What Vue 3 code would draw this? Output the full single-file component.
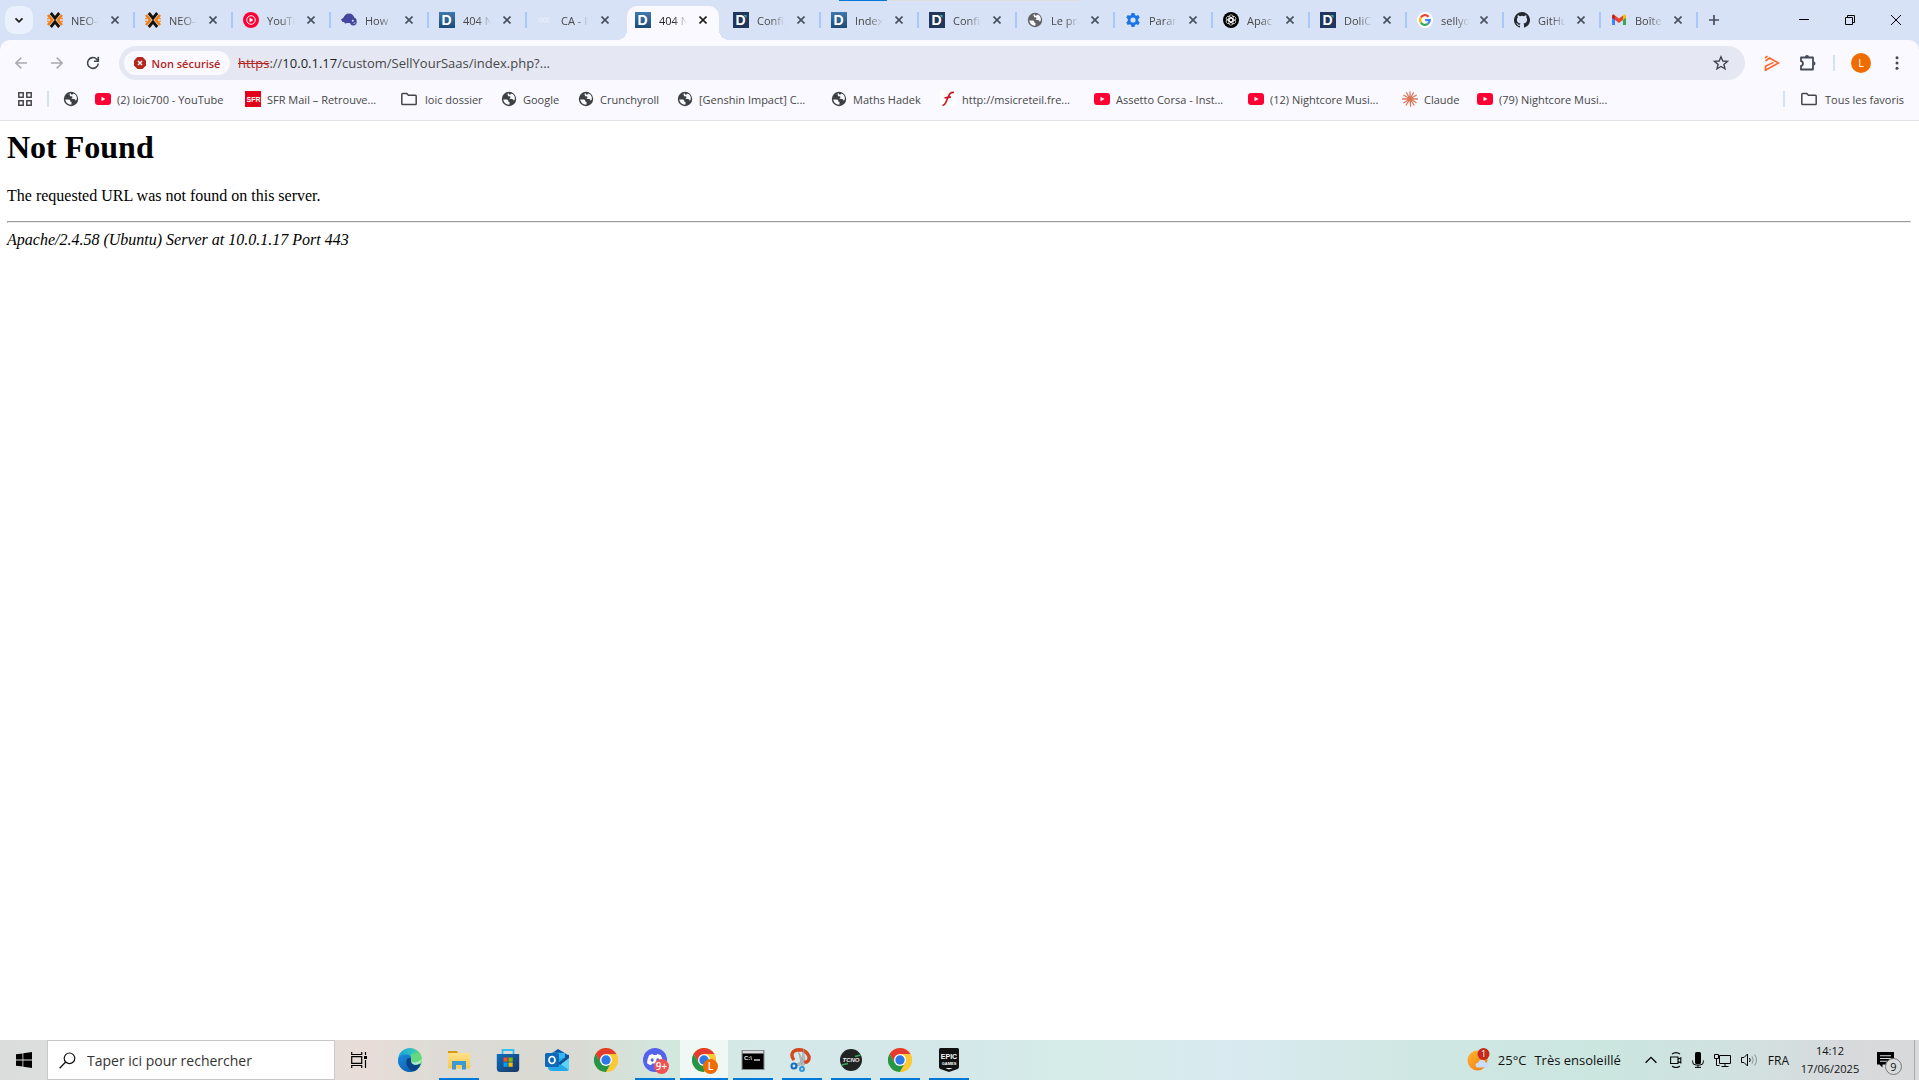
<script setup>
import { ref } from 'vue'

const tabs = [
  { title: 'NEO-N', icon: 'neo' },
  { title: 'NEO-N', icon: 'neo' },
  { title: 'YouTube', icon: 'ytmusic' },
  { title: 'How', icon: 'elephant' },
  { title: '404 Not', icon: 'doli' },
  { title: 'CA - I', icon: 'faint' },
  { title: '404 Not', icon: 'doli', active: true },
  { title: 'Config', icon: 'dolidark' },
  { title: 'Index', icon: 'doli' },
  { title: 'Config', icon: 'dolidark' },
  { title: 'Le pro', icon: 'globegrey' },
  { title: 'Param', icon: 'gear' },
  { title: 'Apac', icon: 'gpt', narrow: true },
  { title: 'DoliCl', icon: 'dolidark', narrow: true },
  { title: 'sellyo', icon: 'google', narrow: true },
  { title: 'GitHub', icon: 'github', narrow: true },
  { title: 'Boîte', icon: 'gmail', narrow: true },
]

const bookmarks = [
  { title: '', icon: 'globe', width: 32 },
  { title: '(2) loic700 - YouTube', icon: 'youtube', width: 150 },
  { title: 'SFR Mail – Retrouve...', icon: 'sfr', width: 156 },
  { title: 'loic dossier', icon: 'folder', width: 100, folder: true },
  { title: 'Google', icon: 'globe', width: 77 },
  { title: 'Crunchyroll', icon: 'globe', width: 99 },
  { title: '[Genshin Impact] C...', icon: 'globe', width: 154 },
  { title: 'Maths Hadek', icon: 'globe', width: 109 },
  { title: 'http://msicreteil.fre...', icon: 'free', width: 154 },
  { title: 'Assetto Corsa - Inst...', icon: 'youtube', width: 154 },
  { title: '(12) Nightcore Musi...', icon: 'youtube', width: 154 },
  { title: 'Claude', icon: 'claude', width: 75 },
  { title: '(79) Nightcore Musi...', icon: 'youtube', width: 150 },
]

const apps = [
  { name: 'Microsoft Edge', icon: 'edge' },
  { name: 'Explorateur de fichiers', icon: 'explorer', open: true },
  { name: 'Microsoft Store', icon: 'store' },
  { name: 'Outlook', icon: 'outlook' },
  { name: 'Google Chrome', icon: 'chrome' },
  { name: 'Discord', icon: 'discord', open: true, badge: '9+' },
  { name: 'Google Chrome', icon: 'chrome', open: true, current: true, badge: 'L' },
  { name: 'Invite de commandes', icon: 'cmd', open: true },
  { name: 'Outil Capture', icon: 'snip', open: true },
  { name: 'TCNO', icon: 'tcno', open: true },
  { name: 'Google Chrome', icon: 'chrome', open: true },
  { name: 'Epic Games', icon: 'epic', open: true },
]

const path = ref('/custom/SellYourSaas/index.php?...')
const query = ref('')
</script>

<template>
  <svg class="gradients" aria-hidden="true">
    <defs>
      <linearGradient id="g-doli" x1="0" y1="0" x2="0" y2="1"><stop offset="0" stop-color="#3f79b0" /><stop offset="1" stop-color="#1c4a78" /></linearGradient>
      <linearGradient id="g-edge" x1="0" y1="0" x2="1" y2="0"><stop offset="0" stop-color="#1e9fdc" /><stop offset=".55" stop-color="#2cc0c8" /><stop offset="1" stop-color="#6fdd5c" /></linearGradient>
      <linearGradient id="g-edge2" x1="0" y1="0" x2="1" y2="1"><stop offset="0" stop-color="#1a8de0" /><stop offset="1" stop-color="#0c4f9c" /></linearGradient>
      <linearGradient id="g-store" x1="0" y1="0" x2="1" y2="1"><stop offset="0" stop-color="#0d6fc0" /><stop offset="1" stop-color="#1c3560" /></linearGradient>
      <linearGradient id="g-folder" x1="0" y1="0" x2="0" y2="1"><stop offset="0" stop-color="#ffe08a" /><stop offset="1" stop-color="#fbc84a" /></linearGradient>
      <linearGradient id="g-sun" x1="0" y1="0" x2="1" y2="1"><stop offset="0" stop-color="#ffb52e" /><stop offset="1" stop-color="#f07a13" /></linearGradient>
    </defs>
  </svg>
  <svg class="sprite" aria-hidden="true">
    <symbol id="i-neo" viewBox="0 0 16 16"><path d="M1 3l4 5-4 5M15 3l-4 5 4 5" fill="none" stroke="#f57c0a" stroke-width="2.600" /><path d="M0 7l2-.5M0 9.500l2-.5M16 7l-2-.5M16 9.500l-2-.5" fill="none" stroke="#f57c0a" stroke-width="1" /><path d="M3.800 1L8 6.200 12.200 1M3.800 15L8 9.800l4.200 5.200" fill="none" stroke="#17120c" stroke-width="2.800" /></symbol>
    <symbol id="i-ytmusic" viewBox="0 0 16 16"><circle cx="8" cy="8" r="8" fill="#ff0033" /><circle cx="8" cy="8" r="4.300" fill="none" stroke="#fff" stroke-width="1" /><path d="M6.500 5.600v4.800L10.400 8z" fill="#fff" /></symbol>
    <symbol id="i-elephant" viewBox="0 0 16 16"><g fill="#4446a0"><ellipse cx="8" cy="6.300" rx="5.300" ry="4.800" /><ellipse cx="12.300" cy="9.500" rx="3.400" ry="4" /><path d="M0 7.500l4-3 5 6-5 1-1-1.500H1.500z" /></g><circle cx="11.800" cy="8.800" r="1" fill="#dde3f5" /><path d="M12.500 11.500l1.800-.6" stroke="#dde3f5" stroke-width=".8" /></symbol>
    <symbol id="i-doli" viewBox="0 0 16 16"><rect width="16" height="16" fill="url(#g-doli)" /><text x="2.500" y="12.800" class="d-mark">D</text></symbol>
    <symbol id="i-dolidark" viewBox="0 0 16 16"><rect width="16" height="16" fill="#20365c" /><text x="2.500" y="12.800" class="d-mark">D</text><path d="M10.500 3h3v3z" fill="#2bb5b5" /></symbol>
    <symbol id="i-faint" viewBox="0 0 16 16"><g fill="none" stroke="#e6ecf7" stroke-width="1.200"><circle cx="4" cy="8" r="1.800" /><circle cx="8" cy="8" r="1.800" /><path d="M13 6.500a2 2 0 1 0 0 3" /></g></symbol>
    <symbol id="i-globeshape" viewBox="0 0 16 16"><circle cx="8" cy="8" r="7.200" /><path d="M2.200 8.600l3.600 0c1 0 1.500.8 1.500 1.500 0 .6.500.9 1.200.9v2.600c-3 .3-5.800-1.800-6.300-5zM5.200 3.300l1.600 0 .2 2 1.500 0c.9 0 1.200.9.8 1.500l-.9 1 2.600.1c1 .1 1.600.9 1.500 1.800l1.200-.9c.8-2.600-.6-5.200-3-6.300l-1.200 1H7.900L8 2.200z" fill="#f9f9ff" /></symbol>
    <symbol id="i-gear" viewBox="0 0 16 16"><path d="M6.600.9h2.800l.5 2 1.400.8 2-.6 1.400 2.400-1.500 1.500v2l1.500 1.500-1.400 2.400-2-.6-1.400.8-.5 2H6.600l-.5-2-1.400-.8-2 .6-1.400-2.400L2.800 9V7L1.300 5.500l1.400-2.400 2 .6 1.400-.8z" fill="#1a73e8" /><circle cx="8" cy="8" r="2.600" fill="#d8e2f6" /></symbol>
    <symbol id="i-gpt" viewBox="0 0 16 16"><circle cx="8" cy="8" r="8" fill="#000" /><g fill="none" stroke="#fff" stroke-width=".7"><rect x="6" y="2.800" width="4.200" height="7.200" rx="2.100" /><rect x="6" y="2.800" width="4.200" height="7.200" rx="2.100" transform="rotate(60 8 8)" /><rect x="6" y="2.800" width="4.200" height="7.200" rx="2.100" transform="rotate(120 8 8)" /><rect x="6" y="2.800" width="4.200" height="7.200" rx="2.100" transform="rotate(180 8 8)" /><rect x="6" y="2.800" width="4.200" height="7.200" rx="2.100" transform="rotate(240 8 8)" /><rect x="6" y="2.800" width="4.200" height="7.200" rx="2.100" transform="rotate(300 8 8)" /></g></symbol>
    <symbol id="i-google" viewBox="0 0 16 16"><circle cx="8" cy="8" r="8" fill="#fff" /><g fill="none" stroke-width="2.300"><path d="M11.600 4.700A4.800 4.800 0 0 0 3.900 5.500" stroke="#ea4335" /><path d="M3.900 5.500a4.800 4.800 0 0 0 0 5" stroke="#fbbc05" /><path d="M3.900 10.500a4.800 4.800 0 0 0 7.200 1.200" stroke="#34a853" /><path d="M11.100 11.700A4.800 4.800 0 0 0 12.800 8.100H8.200" stroke="#4285f4" /></g></symbol>
    <symbol id="i-github" viewBox="0 0 16 16"><path d="M8 0a8 8 0 0 0-2.530 15.590c.4.070.55-.17.550-.38v-1.490c-2.230.49-2.700-.95-2.700-.95-.36-.92-.89-1.170-.89-1.170-.73-.5.050-.49.050-.49.810.06 1.230.83 1.230.83.720 1.230 1.880.87 2.340.67.070-.52.280-.88.510-1.080-1.780-.2-3.640-.89-3.640-3.950 0-.87.310-1.590.82-2.150-.08-.2-.36-1.020.080-2.120 0 0 .67-.22 2.200.82a7.600 7.600 0 0 1 4 0c1.530-1.040 2.200-.82 2.200-.82.440 1.100.16 1.920.080 2.120.51.560.82 1.270.82 2.150 0 3.070-1.870 3.750-3.650 3.950.29.250.54.730.54 1.480v2.200c0 .210.150.46.550.38A8 8 0 0 0 8 0z" fill="#24292f" /></symbol>
    <symbol id="i-gmail" viewBox="0 0 16 16"><path d="M1 4v9h3V7.500z" fill="#4285f4" /><path d="M15 4v9h-3V7.500z" fill="#34a853" /><path d="M12 3.800V8l3-2.200V4.200c0-1.500-1.600-2-2.400-1.200z" fill="#fbbc04" /><path d="M4 3.800V8L1 5.800V4.200C1 2.700 2.600 2.200 3.400 3z" fill="#c5221f" /><path d="M4 3.500l4 3 4-3V8l-4 3-4-3z" fill="#ea4335" /></symbol>
    <symbol id="i-youtube" viewBox="0 0 16 16"><rect y="2" width="16" height="12" rx="3" fill="#ff0033" /><path d="M6.500 5.700v4.600L10.500 8z" fill="#fff" /></symbol>
    <symbol id="i-sfr" viewBox="0 0 16 16"><rect width="16" height="16" fill="#e2001a" /><text x="1.500" y="11" font-size="7" font-weight="700" fill="#fff">SFR</text></symbol>
    <symbol id="i-folder" viewBox="0 0 16 16"><path d="M.8 3.300q0-.8.800-.8h4.200l1.600 1.800h7q.8 0 .8.800v7.600q0 .8-.8.800H1.600q-.8 0-.8-.8z" fill="none" stroke="#474747" stroke-width="1.500" /></symbol>
    <symbol id="i-free" viewBox="0 0 16 16"><rect width="16" height="16" fill="#fff" /><path d="M14 1.500C10 1 9.500 3 8 6.500L5.500 12q-1 2.500-3 2.300M4.500 7q3-.8 6.500-.8" fill="none" stroke="#cc1622" stroke-width="1.700" /></symbol>
    <symbol id="i-claude" viewBox="0 0 16 16"><path d="M8 8V.8M8 8l3.500-6.200M8 8l6.200-3.800M8 8h7.500M8 8l6 3.500M8 8l4 6M8 8l.6 7.200M8 8l-3.800 6M8 8l-6.200 3.700M8 8H.5M8 8L1.800 4.300M8 8L4.500 1.800" stroke="#d97757" stroke-width="1.300" stroke-linecap="round" /></symbol>
    <symbol id="i-edge" viewBox="0 0 24 24"><circle cx="12" cy="12" r="12" fill="url(#g-edge)" /><path d="M0 12C1 7 5 6 9 6.500c4 .5 5 4 4.500 6-.6 2 .3 4 3 4.500 2.500.3 4.500-.3 6-1.200C20.800 20.500 17 24 12 24 5.400 24 0 18.600 0 12z" fill="url(#g-edge2)" /><path d="M9 11.500c-2 5 1 10 7 11.800C20 22 22 18 22.800 15.500c-2 1.500-5.300 2-7.300 1-2.800-1.300-2.300-3.500-2-5-1-2-3.500-2-4.500 0z" fill="#0a4386" /><path d="M12.800 9.300c1 1.200 1 2.500.5 3.800-.7 2 2 4 5 3.500 3-.4 6-3 5.500-6.600z" fill="#dcefe8" opacity=".75" /><path d="M12.500 6.500c2 3-.5 5 1 7.500 3 1.200 8.500-.3 10.500-3.500C23 5.500 18 4 12.500 6.500z" fill="#62d980" /></symbol>
    <symbol id="i-explorer" viewBox="0 0 24 24"><path d="M1 3h9l1.500 3H1z" fill="#d99c16" /><rect x="1" y="5" width="22" height="15.500" rx=".8" fill="url(#g-folder)" /><path d="M5 21.500V13h14v8.500h-4V17H9v4.500z" fill="#3f97d4" /></symbol>
    <symbol id="i-store" viewBox="0 0 24 24"><path d="M6.500 6.500V2h11v4.500" fill="none" stroke="#35bdf0" stroke-width="1.800" /><path d="M.8 6h22.400v14.500q0 3.500-3.500 3.500H4.300Q.8 24 .8 20.500z" fill="url(#g-store)" /><path fill="#f25022" d="M7.500 9.500h4.200v4.200H7.500z" /><path fill="#7fba00" d="M12.500 9.500h4.200v4.200h-4.200z" /><path fill="#00a4ef" d="M7.500 14.500h4.200v4.200H7.500z" /><path fill="#ffb900" d="M12.500 14.500h4.200v4.200h-4.200z" /></symbol>
    <symbol id="i-outlook" viewBox="0 0 24 24"><path d="M4 7l9-6 10 6v8H4z" fill="#0d59a8" /><path d="M8 4.500l12 .5v9H8z" fill="#35b8ef" /><path d="M3 12l21-3v12q0 2-2.500 2H7q-3 0-4-3z" fill="#25a9e8" /><path d="M14 15l10-7v14z" fill="#5ad4f5" /><path d="M13 15L24 6.500V10l-9 7z" fill="#0f4f93" /><rect y="5" width="14" height="14" rx="1.500" fill="#0f68b8" /><ellipse cx="7" cy="12" rx="3" ry="3.500" fill="none" stroke="#fff" stroke-width="1.700" /></symbol>
    <symbol id="i-chrome" viewBox="0 0 24 24"><circle cx="12" cy="12" r="12" fill="#fcc934" /><path d="M1.600 6A12 12 0 0 1 22.400 6H12l-5.200 9z" fill="#e33b2e" /><path d="M1.600 6A12 12 0 0 0 12 24l5.200-9-10.400 0z" fill="#23964a" /><path d="M12 6h10.400A12 12 0 0 1 12 24l5.200-9z" fill="#fcc934" /><circle cx="12" cy="12" r="6" fill="#fff" /><circle cx="12" cy="12" r="4.700" fill="#2b78e9" /></symbol>
    <symbol id="i-discord" viewBox="0 0 24 24"><circle cx="12" cy="12" r="12" fill="#5562ec" /><path d="M6.200 7.200Q8 6.200 9.800 6l.7 1.100h3L14.200 6q1.800.2 3.600 1.200 2.200 3.800 2.200 8-1.900 1.600-4 2l-1-1.700H9l-1 1.700q-2.100-.4-4-2 0-4.200 2.200-8z" fill="#fff" /><ellipse cx="9.200" cy="12" rx="1.600" ry="1.800" fill="#5562ec" /><ellipse cx="14.800" cy="12" rx="1.600" ry="1.800" fill="#5562ec" /></symbol>
    <symbol id="i-cmd" viewBox="0 0 24 24"><rect x="1" y="2.500" width="22" height="19" fill="#000" stroke="#898989" /><path d="M1.500 3h21v2.500h-21z" fill="#d7d9dc" /><text x="3" y="12" font-size="6" font-weight="700" fill="#e8e8e8">C:\</text><path d="M13 12h6" stroke="#e8e8e8" stroke-width="1.300" /></symbol>
    <symbol id="i-snip" viewBox="0 0 24 24"><path d="M4 12C0 7 2 2 9 1.800 17 2 21 9 18 13c-1.500 1.500-4 1.500-6 .5" fill="none" stroke="#d4481d" stroke-width="3.400" /><path d="M8.500 4l6.500 12-3 2.500zM13.500 1l1.500 11-5 5.500-5 .5 1-2 4-1.500 2-3z" fill="#b9bdc2" stroke="#8f9499" stroke-width=".5" /><circle cx="4" cy="18" r="2.500" fill="none" stroke="#156fbf" stroke-width="2.100" /><circle cx="12" cy="21" r="2" fill="none" stroke="#2d97de" stroke-width="2" /></symbol>
    <symbol id="i-tcno" viewBox="0 0 24 24"><circle cx="12" cy="12" r="11" fill="#212323" /><path d="M2.500 17L9 15.500M21.500 7L16 8.500" stroke="#39a85d" stroke-width="1.400" /><text x="12" y="14" text-anchor="middle" font-size="6" font-weight="700" font-style="italic" fill="#e9eeee">TCNO</text></symbol>
    <symbol id="i-epic" viewBox="0 0 24 24"><path d="M2 1.500Q2 0 3.500 0h17Q22 0 22 1.500V19q0 1.500-1.400 2L12 24l-8.600-3Q2 20.500 2 19z" fill="#111" /><text x="12" y="11" text-anchor="middle" font-size="7" font-weight="700" fill="#fff">EPIC</text><text x="12" y="17" text-anchor="middle" font-size="4" font-weight="700" fill="#fff">GAMES</text><path d="M8.500 20h7L12 21.500z" fill="#fff" /></symbol>
  </svg>

  <div class="desktop">
    <div class="top-strip" aria-hidden="true"></div>
    <header class="browser">
      <div class="tabstrip">
        <button class="tab-search" aria-label="Rechercher dans les onglets">
          <svg width="10" height="10" viewBox="0 0 10 10"><path d="M1.500 3.300L5 6.800l3.500-3.500" fill="none" stroke="#1f1f1f" stroke-width="1.800" /></svg>
        </button>
        <div v-for="(tab, i) in tabs" :key="i" class="tab" :class="{ active: tab.active, narrow: tab.narrow, 'no-sep': tab.active || (tabs[i + 1] && tabs[i + 1].active) }">
          <button class="tab-main">
            <svg v-if="tab.icon === 'globegrey'" class="icon16" fill="#5f6368"><use href="#i-globeshape" /></svg>
            <svg v-else class="icon16"><use :href="'#i-' + tab.icon" /></svg>
            <span class="tab-title">{{ tab.title }}</span>
          </button>
          <button class="tab-close" aria-label="Fermer l’onglet">
            <svg width="8" height="8" viewBox="0 0 8 8"><path d="M.5.5l7 7M7.500.5l-7 7" stroke="currentColor" stroke-width="1.600" /></svg>
          </button>
        </div>
        <button class="tab-new" aria-label="Nouvel onglet">
          <svg width="10" height="10" viewBox="0 0 10 10"><path d="M5 0v10M0 5h10" stroke="#474f5c" stroke-width="1.700" /></svg>
        </button>
        <div class="window-controls">
          <button aria-label="Réduire"><svg width="10" height="10" viewBox="0 0 10 10"><path d="M0 4.500h10" stroke="#000" /></svg></button>
          <button aria-label="Restaurer"><svg width="10" height="10" viewBox="0 0 10 10"><path d="M.5 2.500h7v7h-7zM2.500 2.500v-2h7v7h-2" fill="none" stroke="#000" /></svg></button>
          <button aria-label="Fermer"><svg width="10" height="10" viewBox="0 0 10 10"><path d="M0 0l10 10M10 0L0 10" stroke="#000" /></svg></button>
        </div>
      </div>

      <div class="toolbar">
        <nav class="nav">
          <button aria-label="Retour" disabled><svg width="12" height="12" viewBox="0 0 12 12"><path d="M12 6H1M6.300.6L.9 6l5.400 5.400" fill="none" stroke="#a9aab1" stroke-width="1.500" /></svg></button>
          <button aria-label="Avancer" disabled><svg width="12" height="12" viewBox="0 0 12 12"><path d="M0 6h11M5.700.6L11.100 6l-5.400 5.400" fill="none" stroke="#a9aab1" stroke-width="1.500" /></svg></button>
          <button aria-label="Actualiser"><svg width="14" height="14" viewBox="0 0 14 14"><path d="M12.300 7.500A5.400 5.400 0 1 1 10.800 3.200L12 4.500M12.300.8v4.400H8" fill="none" stroke="#42474f" stroke-width="1.600" /></svg></button>
        </nav>
        <div class="omnibox">
          <button class="insecure">
            <svg width="12" height="12" viewBox="0 0 12 12"><path d="M3.500 0h5L12 3.500v5L8.500 12h-5L0 8.500v-5z" fill="#b3261e" /><path d="M4 4l4 4M8 4L4 8" stroke="#fff" stroke-width="1.400" /></svg>
            <span>Non sécurisé</span>
          </button>
          <label for="url" class="origin"><s>https</s>://<span class="host">10.0.1.17</span></label>
          <input id="url" v-model="path" type="text" spellcheck="false" />
          <button class="star" aria-label="Ajouter aux favoris"><svg width="16" height="16" viewBox="0 0 16 16"><path d="M8 1.800l1.800 4.200 4.600.4-3.500 3 1.100 4.500L8 11.500l-4 2.400 1.100-4.500-3.500-3L6.200 6z" fill="none" stroke="#42474f" stroke-width="1.400" /></svg></button>
        </div>
        <div class="actions">
          <button aria-label="Extension"><svg width="16" height="16" viewBox="0 0 16 16"><path d="M1 3l2.500-1.800M1.500 6l4-3L14.500 8l-13 7.200v-4l8-3.800" fill="none" stroke="#ff6426" stroke-width="1.600" /></svg></button>
          <button aria-label="Extensions"><svg width="16" height="16" viewBox="0 0 16 16"><path d="M1 2.500h12v12H1v-3.600c2.600-.4 2.600-4.300 0-4.700z" fill="none" stroke="#454b58" stroke-width="1.800" stroke-linejoin="round" /><path d="M5 2a2 2 0 0 1 4 0zM13.500 6.500a2 2 0 0 1 0 4z" fill="#454b58" /></svg></button>
          <i class="divider"></i>
          <button class="profile" aria-label="Profil"><span>L</span></button>
          <button aria-label="Menu"><svg width="4" height="14" viewBox="0 0 4 14" fill="#474747"><circle cx="2" cy="1.700" r="1.500" /><circle cx="2" cy="7" r="1.500" /><circle cx="2" cy="12.300" r="1.500" /></svg></button>
        </div>
      </div>

      <nav class="bookmarks">
        <button class="apps" aria-label="Applications"><svg width="14" height="14" viewBox="0 0 14 14"><path d="M.8.8h4.400v4.400H.8zM8.800.8h4.400v4.400H8.800zM.8 8.800h4.400v4.400H.8zM8.800 8.800h4.400v4.400H8.800z" fill="none" stroke="#474747" stroke-width="1.500" /></svg></button>
        <i class="divider"></i>
        <div class="bookmark-list">
          <a v-for="(b, i) in bookmarks" :key="i" href="#" class="bookmark" :class="{ folder: b.folder }" :style="{ width: b.width + 'px' }" :aria-label="b.title || 'Favori'">
            <svg v-if="b.icon === 'globe'" class="icon16" fill="#3c4043"><use href="#i-globeshape" /></svg>
            <svg v-else class="icon16"><use :href="'#i-' + b.icon" /></svg>
            <span v-if="b.title">{{ b.title }}</span>
          </a>
        </div>
        <i class="divider"></i>
        <a href="#" class="bookmark folder all">
          <svg class="icon16"><use href="#i-folder" /></svg>
          <span>Tous les favoris</span>
        </a>
      </nav>
    </header>

    <main class="page">
      <h1>Not Found</h1>
      <p>The requested URL was not found on this server.</p>
      <hr />
      <address>Apache/2.4.58 (Ubuntu) Server at 10.0.1.17 Port 443</address>
    </main>

    <footer class="taskbar">
      <button class="start" aria-label="Démarrer"><svg width="16" height="16" viewBox="0 0 16 16"><path d="M0 2.300L6.500 1.400v6.200H0zM7.300 1.300L16 0v7.600H7.300zM0 8.400h6.500v6.200L0 13.700zM7.300 8.400H16V16l-8.700-1.300z" /></svg></button>
      <label class="search">
        <svg width="17" height="17" viewBox="0 0 17 17"><circle cx="10.500" cy="6.300" r="5.300" fill="none" stroke="#111" stroke-width="1.200" /><path d="M6.700 10L.6 16.200" stroke="#111" stroke-width="1.300" /></svg>
        <input v-model="query" type="text" placeholder="Taper ici pour rechercher" aria-label="Rechercher" />
      </label>
      <button class="task-view" aria-label="Affichage des tâches"><svg width="17" height="16" viewBox="0 0 17 16"><path d="M.7 0v2.500h10V0M.7 16v-2.500h10V16M.7 4.700h10v6.600H.7zM14.500 0v3M14.500 8v8" fill="none" stroke="#000" stroke-width="1.200" /><path d="M13 4h3v3h-3z" /></svg></button>
      <div class="app-list">
        <button v-for="(a, i) in apps" :key="i" class="app" :class="{ open: a.open, current: a.current }" :aria-label="a.name">
          <svg width="24" height="24"><use :href="'#i-' + a.icon" /></svg>
          <span v-if="a.badge" class="app-badge" :class="{ orange: a.badge === 'L' }">{{ a.badge }}</span>
        </button>
      </div>
      <button class="weather">
        <svg width="23" height="24" viewBox="0 0 23 24"><circle cx="10.500" cy="12.500" r="10" fill="url(#g-sun)" /><path d="M11 19.500q-2.500 0-2.500-2.300t2.700-2.400q.8-3 3.800-3 2.800 0 3.600 2.700 3.400.1 3.400 2.600 0 2.400-2.600 2.400z" fill="#c9dcfa" /><circle cx="16.500" cy="6" r="6" fill="#c42b1c" /><text x="16.500" y="9" text-anchor="middle" font-size="9" fill="#fff">1</text></svg>
        <span>25°C</span>
        <span>Très ensoleillé</span>
      </button>
      <div class="tray">
        <button class="chevron" aria-label="Icônes cachées"><svg width="12" height="8" viewBox="0 0 12 8"><path d="M.6 6.800L6 1.400l5.400 5.400" fill="none" stroke="#000" stroke-width="1.300" /></svg></button>
        <button aria-label="Caméra"><svg width="12" height="16" viewBox="0 0 12 16"><path d="M.6 5h7.400v6.500H.6zM8 7.200l2.800-1.400v5L8 9.400M2 2Q6-.8 10 2M2 14.300q4 2.500 8 0" fill="none" stroke="#000" stroke-width="1.100" /></svg></button>
        <button aria-label="Micro"><svg width="12" height="16" viewBox="0 0 12 16"><rect x="3" width="6" height="12" rx="1.500" /><path d="M.6 8.500v1.300Q.6 13 4 13h4q3.400 0 3.400-3.200V8.500M6 13v2.500M3 15.400h6" fill="none" stroke="#000" /></svg></button>
        <button aria-label="Réseau"><svg width="17" height="15" viewBox="0 0 17 15"><path d="M5.500 2.500h11v8h-11zM11 10.500v3M7.500 13.500h7M.5 1.500h4v4h-4zM2.500 5.500v7h3" fill="none" stroke="#000" /></svg></button>
        <button aria-label="Volume"><svg width="17" height="14" viewBox="0 0 17 14"><path d="M.5 4.500h2.500L6.500 1v12L3 9.500H.5zM8.500 5q1.500 2 0 4" fill="none" stroke="#000" /><path d="M11 3.300q2.500 3.700 0 7.400M13.500 1.500q4 5.500 0 11" fill="none" stroke="#8b9694" /></svg></button>
        <button class="lang">FRA</button>
      </div>
      <button class="clock"><span>14:12</span><span>17/06/2025</span></button>
      <button class="notif" aria-label="9 notifications">
        <svg width="17" height="16" viewBox="0 0 17 16"><path d="M0 0h17v12.500H5.500v3L2.500 12.500H0z" /><path d="M3 3.700h11M3 6.500h11M3 9.300h7" stroke="#d5dddd" stroke-width="1.100" /></svg>
        <span>9</span>
      </button>
      <button class="show-desktop" aria-label="Afficher le bureau"></button>
    </footer>
  </div>
</template>

<style>
body {
  margin: 0;
  background: #fff;
}
</style>

<style scoped>
.desktop {
  display: flex;
  flex-direction: column;
  min-height: 100vh;
  position: relative;
  font-family: "Open Sans", "Noto Sans", sans-serif;
  font-size: 11px;
  color: #474747;
}

button {
  display: flex;
  align-items: center;
  justify-content: center;
  padding: 0;
  border: 0;
  background: none;
  font: inherit;
  color: inherit;
}

input {
  min-width: 0;
  flex: 1;
  padding: 0;
  border: 0;
  outline: 0;
  background: none;
  font: inherit;
  color: inherit;
}

svg {
  flex: none;
  display: block;
}

.gradients {
  position: absolute;
  width: 0;
  height: 0;
}

svg.sprite {
  display: none;
}

.sprite text {
  font-family: "Liberation Sans", sans-serif;
}

.sprite .d-mark {
  font-size: 14px;
  font-weight: 700;
  fill: #fff;
}

.icon16 {
  width: 16px;
  height: 16px;
}

.divider {
  flex: none;
  width: 2px;
  height: 16px;
  background: #d3e1fb;
}

.top-strip {
  position: absolute;
  top: 0;
  left: 839px;
  width: 241px;
  height: 1px;
  background: linear-gradient(90deg, #0078d7 48px, #dedede 48px);
}

.browser {
  background: #d8e2f6;
}

.tabstrip {
  display: flex;
  align-items: stretch;
  height: 40px;
}

.tab-search {
  align-self: center;
  flex: none;
  width: 28px;
  height: 28px;
  margin: 0 4px 0 5px;
  border-radius: 10px;
  background: #ebf0fd;
}

.tab {
  display: flex;
  align-items: center;
  flex: 0 1 98px;
  box-sizing: border-box;
  min-width: 0;
  padding: 0 16px 0 10px;
  position: relative;
}

.tab.narrow {
  flex-basis: 97px;
}

.tab::after {
  content: "";
  position: absolute;
  right: 0;
  top: 12px;
  width: 2px;
  height: 16px;
  background: #a8c7fa;
}

.tab.no-sep::after {
  display: none;
}

.tab.active {
  color: #1f1f1f;
}

.tab.active::before {
  content: "";
  position: absolute;
  left: 2px;
  right: 4px;
  top: 6px;
  bottom: 0;
  border-radius: 10px 10px 0 0;
  background: #f9f9ff;
}

.tab.active::after {
  display: block;
  left: -8px;
  right: -6px;
  top: 30px;
  width: auto;
  height: 10px;
  background:
    radial-gradient(circle at 0 0, transparent 10px, #f9f9ff 10px) left / 10px 10px no-repeat,
    radial-gradient(circle at 100% 0, transparent 10px, #f9f9ff 10px) right / 10px 10px no-repeat;
}

.tab-main {
  position: relative;
  flex: 1;
  min-width: 0;
  gap: 8px;
  justify-content: flex-start;
}

.tab-title {
  width: 28px;
  overflow: hidden;
  white-space: nowrap;
  text-align: left;
  mask-image: linear-gradient(90deg, #000 50%, transparent);
}

.tab-close {
  position: relative;
  flex: none;
  width: 8px;
  height: 16px;
  color: #474f5c;
}

.active .tab-close {
  color: #1f1f1f;
}

.tab-new {
  width: 32px;
  flex: none;
}

.window-controls {
  display: flex;
  margin-left: auto;
}

.window-controls button {
  width: 46px;
}

.toolbar {
  display: flex;
  align-items: center;
  height: 46px;
  padding-right: 4px;
  background: #f9f9ff;
  border-radius: 10px 10px 0 0;
}

.nav {
  display: flex;
  padding-left: 3px;
}

.nav button {
  width: 36px;
  height: 34px;
}

.omnibox {
  display: flex;
  align-items: center;
  flex: 1;
  min-width: 0;
  height: 34px;
  margin-left: 8px;
  padding: 0 16px 0 5px;
  box-sizing: border-box;
  border-radius: 17px;
  background: #e5e8f3;
  font-size: 13px;
}

.insecure {
  gap: 6px;
  height: 24px;
  width: 106px;
  margin-right: 8px;
  border-radius: 12px;
  background: #f9f9ff;
  color: #b3261e;
  font-size: 11px;
  font-weight: 600;
  white-space: nowrap;
}

.origin s {
  color: #b3261e;
}

.host {
  color: #1f1f1f;
}

.actions {
  display: flex;
  align-items: center;
  margin-left: 9px;
}

.actions button {
  width: 36px;
  height: 34px;
}

.actions .divider {
  margin: 0 8px 0 7px;
}

.profile span {
  width: 20px;
  height: 20px;
  border-radius: 50%;
  background: #ef6c00;
  color: #fff;
  font-size: 11px;
  line-height: 20px;
}

.bookmarks {
  display: flex;
  align-items: center;
  height: 26px;
  padding-bottom: 8px;
  background: #f9f9ff;
  border-bottom: 1px solid #dfe1eb;
}

.apps {
  width: 29px;
  height: 26px;
  margin: 0 8px 0 10px;
}

.bookmark-list {
  display: flex;
  flex: 1;
  min-width: 0;
  margin-left: 14px;
}

.bookmark {
  display: flex;
  align-items: center;
  flex: none;
  gap: 6px;
  color: #474747;
  text-decoration: none;
  white-space: nowrap;
}

.bookmark.folder {
  gap: 8px;
}

.bookmark.all {
  margin: 0 15px 0 16px;
}

.page {
  flex: 1;
  padding: 8px 8px 8px 7px;
  background: #fff;
  color: #000;
  font-family: "Liberation Serif", serif;
  font-size: 16px;
}

.page h1 {
  margin: 0 0 21px;
  font-size: 32px;
  line-height: 37px;
}

.page p {
  margin: 0;
  line-height: 18px;
}

.page hr {
  margin: 16px 0 8px;
}

.page address {
  line-height: 18px;
}

.taskbar {
  display: flex;
  height: 40px;
  background: linear-gradient(90deg, #dbdddd 0, #e2dfdd 12%, #e8dcd8 19%, #dddbd5 23%, #d9dad3 30%, #d2e8de 35%, #d5e9e9 40%, #d3e7e9 49%, #d5ece8 56%, #d9eaf0 64%, #cfe7e2 74%, #cbe5df 84%, #d0e2df 90%, #d7dadc 96%, #d9d9da 100%);
  color: #111;
}

.start {
  width: 47px;
}

.search {
  display: flex;
  align-items: center;
  gap: 11px;
  box-sizing: border-box;
  width: 288px;
  padding-left: 11px;
  border: 1px solid #c8c8c8;
  background: #fff;
  font-size: 14px;
}

.search input::placeholder {
  color: #333;
  opacity: 1;
}

.task-view {
  width: 48px;
  margin-right: 3px;
}

.app-list {
  display: flex;
  gap: 1px;
}

.app {
  position: relative;
  width: 48px;
}

.app.open::after {
  content: "";
  position: absolute;
  left: 4px;
  right: 4px;
  bottom: 0;
  height: 2px;
  background: #0078d7;
}

.app.current {
  background: #f0f8f6;
}

.app.current::after {
  left: 0;
  right: 0;
}

.app-badge {
  position: absolute;
  left: 23px;
  top: 19px;
  width: 15px;
  height: 15px;
  border-radius: 50%;
  background: #ee5253;
  color: #fff;
  font-size: 10px;
  font-weight: 600;
  line-height: 15px;
  text-align: center;
}

.app-badge.orange {
  background: #ef6c00;
}

.weather {
  gap: 8px;
  margin-left: auto;
  font-size: 13px;
  white-space: nowrap;
}

.tray {
  display: flex;
  gap: 10px;
  margin-left: 24px;
}

.chevron {
  margin-right: 3px;
}

.lang {
  font-size: 12px;
}

.clock {
  flex-direction: column;
  width: 72px;
  margin: 0 2px 0 5px;
  line-height: 18px;
}

.notif {
  position: relative;
  width: 34px;
  margin-right: 12px;
}

.notif span {
  position: absolute;
  left: 17px;
  top: 18px;
  width: 15px;
  height: 15px;
  border: 1px solid #777;
  border-radius: 50%;
  background: #d9dcdc;
  line-height: 15px;
  text-align: center;
}

.show-desktop {
  width: 5px;
  border-left: 1px solid #a5a9ab;
}
</style>
